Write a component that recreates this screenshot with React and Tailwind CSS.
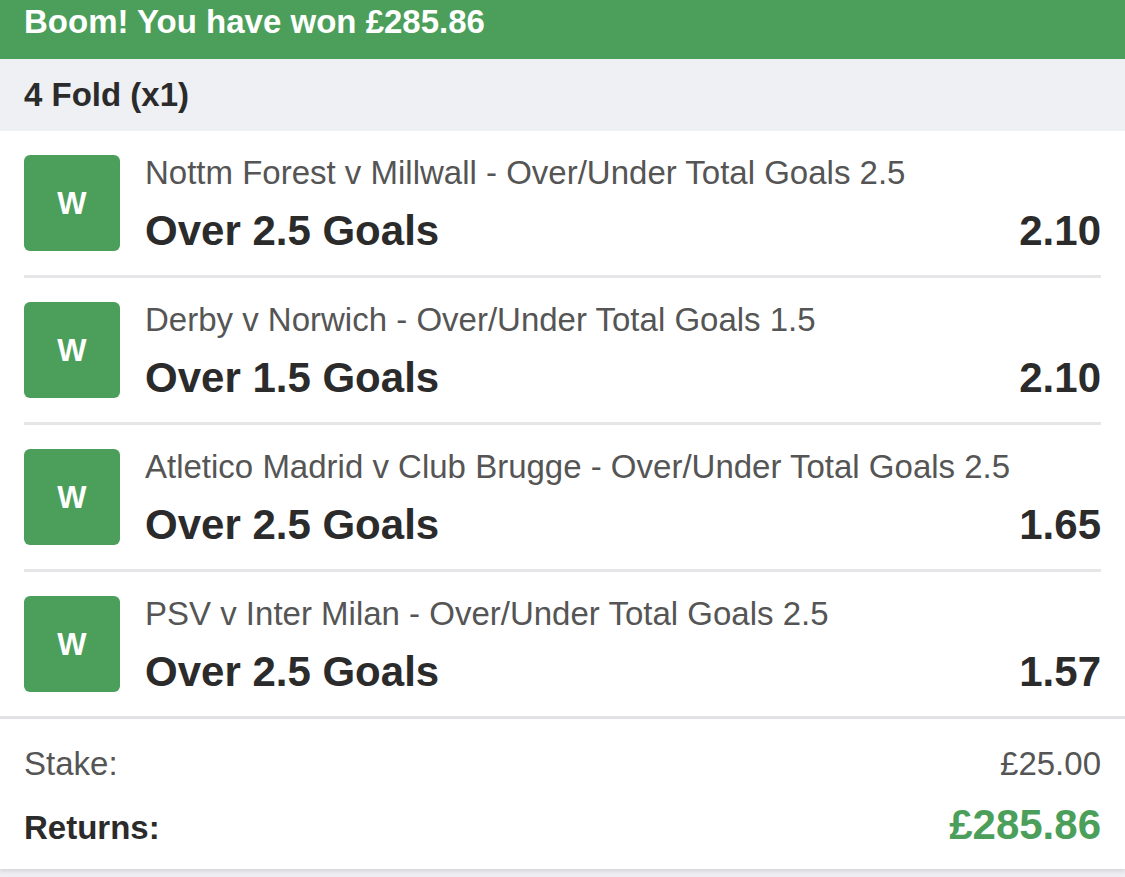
import React from "react";

const legs = [
  { market: "Nottm Forest v Millwall - Over/Under Total Goals 2.5", sel: "Over 2.5 Goals", odds: "2.10" },
  { market: "Derby v Norwich - Over/Under Total Goals 1.5", sel: "Over 1.5 Goals", odds: "2.10" },
  { market: "Atletico Madrid v Club Brugge - Over/Under Total Goals 2.5", sel: "Over 2.5 Goals", odds: "1.65" },
  { market: "PSV v Inter Milan - Over/Under Total Goals 2.5", sel: "Over 2.5 Goals", odds: "1.57" },
];

export default function App() {
  return (
    <div
      className="min-h-screen bg-[#efeff3] text-[#2b2b2b]"
      style={{ fontFamily: '"Liberation Sans", Arial, Helvetica, sans-serif' }}
    >
      <div className="h-[59px] bg-[#4b9f5a] pl-[24px] pt-[5px]">
        <div className="text-[33px] leading-[33px] font-bold text-white">Boom! You have won £285.86</div>
      </div>
      <div className="h-[72px] bg-[#eff0f4] pl-[24px] flex items-center">
        <div className="text-[33px] leading-[36px] font-bold text-[#2b2b2b]">4 Fold (x1)</div>
      </div>
      <div className="bg-white border-b-[3px] border-[#e3e3e7]">
        {legs.map((l, i) => (
          <div key={i} className="px-[24px]">
            <div
              className={
                i < legs.length - 1
                  ? "flex items-start py-[24px] border-b-[3px] border-[#e6e6e9]"
                  : "flex items-start py-[24px]"
              }
            >
              <div className="w-[96px] h-[96px] shrink-0 rounded-[6px] bg-[#4b9f5a] flex items-center justify-center text-white font-bold text-[31px] leading-none">
                W
              </div>
              <div className="ml-[25px] flex-1 h-[96px] flex flex-col justify-between">
                <div className="text-[33px] leading-[36px] text-[#555555] whitespace-nowrap">{l.market}</div>
                <div className="flex justify-between items-baseline text-[42px] leading-[40px] font-bold text-[#2b2b2b]">
                  <span>{l.sel}</span>
                  <span>{l.odds}</span>
                </div>
              </div>
            </div>
          </div>
        ))}
      </div>
      <div className="bg-white px-[24px] pt-[25px] pb-[17px] shadow-[0_2px_4px_rgba(0,0,0,0.12)]">
        <div className="flex justify-between items-baseline text-[33px] leading-[40px] text-[#555555]">
          <span>Stake:</span>
          <span>£25.00</span>
        </div>
        <div className="mt-[17px] flex justify-between items-baseline leading-[48px]">
          <span className="text-[33px] font-bold text-[#2b2b2b]">Returns:</span>
          <span className="text-[42px] font-bold text-[#4b9f5a]">£285.86</span>
        </div>
      </div>
    </div>
  );
}
